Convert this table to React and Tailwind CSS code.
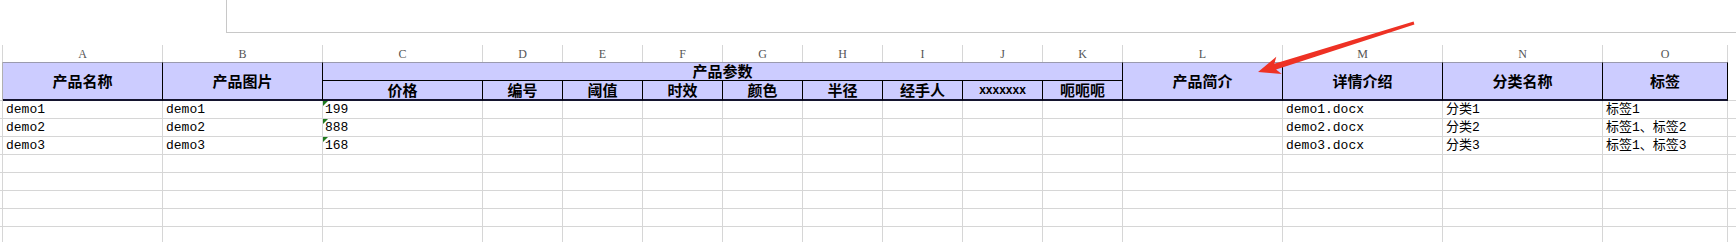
const LETTERS = ['A', 'B', 'C', 'D', 'E', 'F', 'G', 'H', 'I', 'J', 'K', 'L', 'M', 'N', 'O'];
const PARAMS = ['价格', '编号', '阈值', '时效', '颜色', '半径', '经手人', 'xxxxxxx', '呃呃呃'];
const TAIL = ['产品简介', '详情介绍', '分类名称', '标签'];

const ROWS = [
  ['demo1', 'demo1', '199', '', '', '', '', '', '', '', '', '', 'demo1.docx', '分类1', '标签1'],
  ['demo2', 'demo2', '888', '', '', '', '', '', '', '', '', '', 'demo2.docx', '分类2', '标签1、标签2'],
  ['demo3', 'demo3', '168', '', '', '', '', '', '', '', '', '', 'demo3.docx', '分类3', '标签1、标签3'],
  ...Array.from({ length: 5 }, () => Array(15).fill('')),
];

const head = "flex items-center justify-center bg-[#ccccff] border-t border-t-[#9a9aae] border-r border-r-black border-b-2 border-b-[#14142e] font-['Noto_Sans_CJK_SC',sans-serif] font-bold text-[15px] text-black";
const sub = "flex items-center justify-center bg-[#ccccff] border-r border-r-black border-b-2 border-b-[#14142e] font-['Noto_Sans_CJK_SC',sans-serif] font-bold text-[15px] text-black";
const cell = "relative flex items-end px-[3px] border-r border-b border-[#d6d6d6] font-['Liberation_Mono','Noto_Sans_CJK_SC',monospace] text-[13px] leading-[16px] text-black whitespace-nowrap overflow-hidden";

function Arrow() {
  return (
    <svg className="absolute left-0 top-0 pointer-events-none" width="1736" height="242" viewBox="0 0 1736 242">
      <polygon
        fill="#ee3124"
        points="1258,72 1281.7,74 1276.1,69.4 1414.4,24.4 1413.6,21.6 1274.3,63.7 1276.3,56.8"
      />
    </svg>
  );
}

export default function App() {
  return (
    <div className="relative w-[1736px] h-[242px] overflow-hidden bg-white">
      {/* formula bar */}
      <div className="h-[45px]">
        <div className="ml-[226px] h-[33px] border-l border-b border-[#c8c8c8]" />
      </div>

      <div className="grid grid-cols-[3px_160px_160px_160px_80px_80px_80px_80px_80px_80px_80px_80px_160px_160px_160px_125px_1fr] grid-rows-[17px_19px_20px_repeat(8,18px)]">
        {/* column letters */}
        <div className="border-r border-[#d6d6d6]" />
        {LETTERS.map(l => (
          <div key={l} className="flex items-center justify-center border-r border-[#d6d6d6] font-['Liberation_Serif',serif] text-[12px] text-[#555]">
            {l}
          </div>
        ))}
        <div />

        {/* header */}
        <div className="row-span-2 border-r border-[#b0b0b0] border-b border-b-[#d6d6d6]" />
        <div className={`row-span-2 ${head}`}>产品名称</div>
        <div className={`row-span-2 ${head}`}>产品图片</div>
        <div className="col-span-9 flex items-center justify-center bg-[#ccccff] border-t border-t-[#9a9aae] border-r border-r-black border-b border-b-black font-['Noto_Sans_CJK_SC',sans-serif] font-bold text-[15px] text-black">
          产品参数
        </div>
        {TAIL.map(t => (
          <div key={t} className={`row-span-2 ${head}`}>{t}</div>
        ))}
        <div className="row-span-2 border-b border-[#d6d6d6]" />
        {PARAMS.map(p => (
          <div
            key={p}
            className={p === 'xxxxxxx' ? `${sub} !font-['Liberation_Sans',sans-serif] !text-[12px]` : sub}
          >
            {p}
          </div>
        ))}

        {/* data */}
        {ROWS.map((row, r) => (
          <div key={r} className="contents">
            <div className="border-r border-b border-[#d6d6d6]" />
            {row.map((v, c) => (
              <div key={c} className={c === 2 ? `${cell} !px-[2px]` : cell}>
                {c === 2 && v && (
                  <span className="absolute left-0 top-0 w-0 h-0 border-t-[5px] border-r-[5px] border-t-[#1f7a1f] border-r-transparent" />
                )}
                {v}
              </div>
            ))}
            <div className="border-b border-[#d6d6d6]" />
          </div>
        ))}
      </div>

      <Arrow />
    </div>
  );
}
